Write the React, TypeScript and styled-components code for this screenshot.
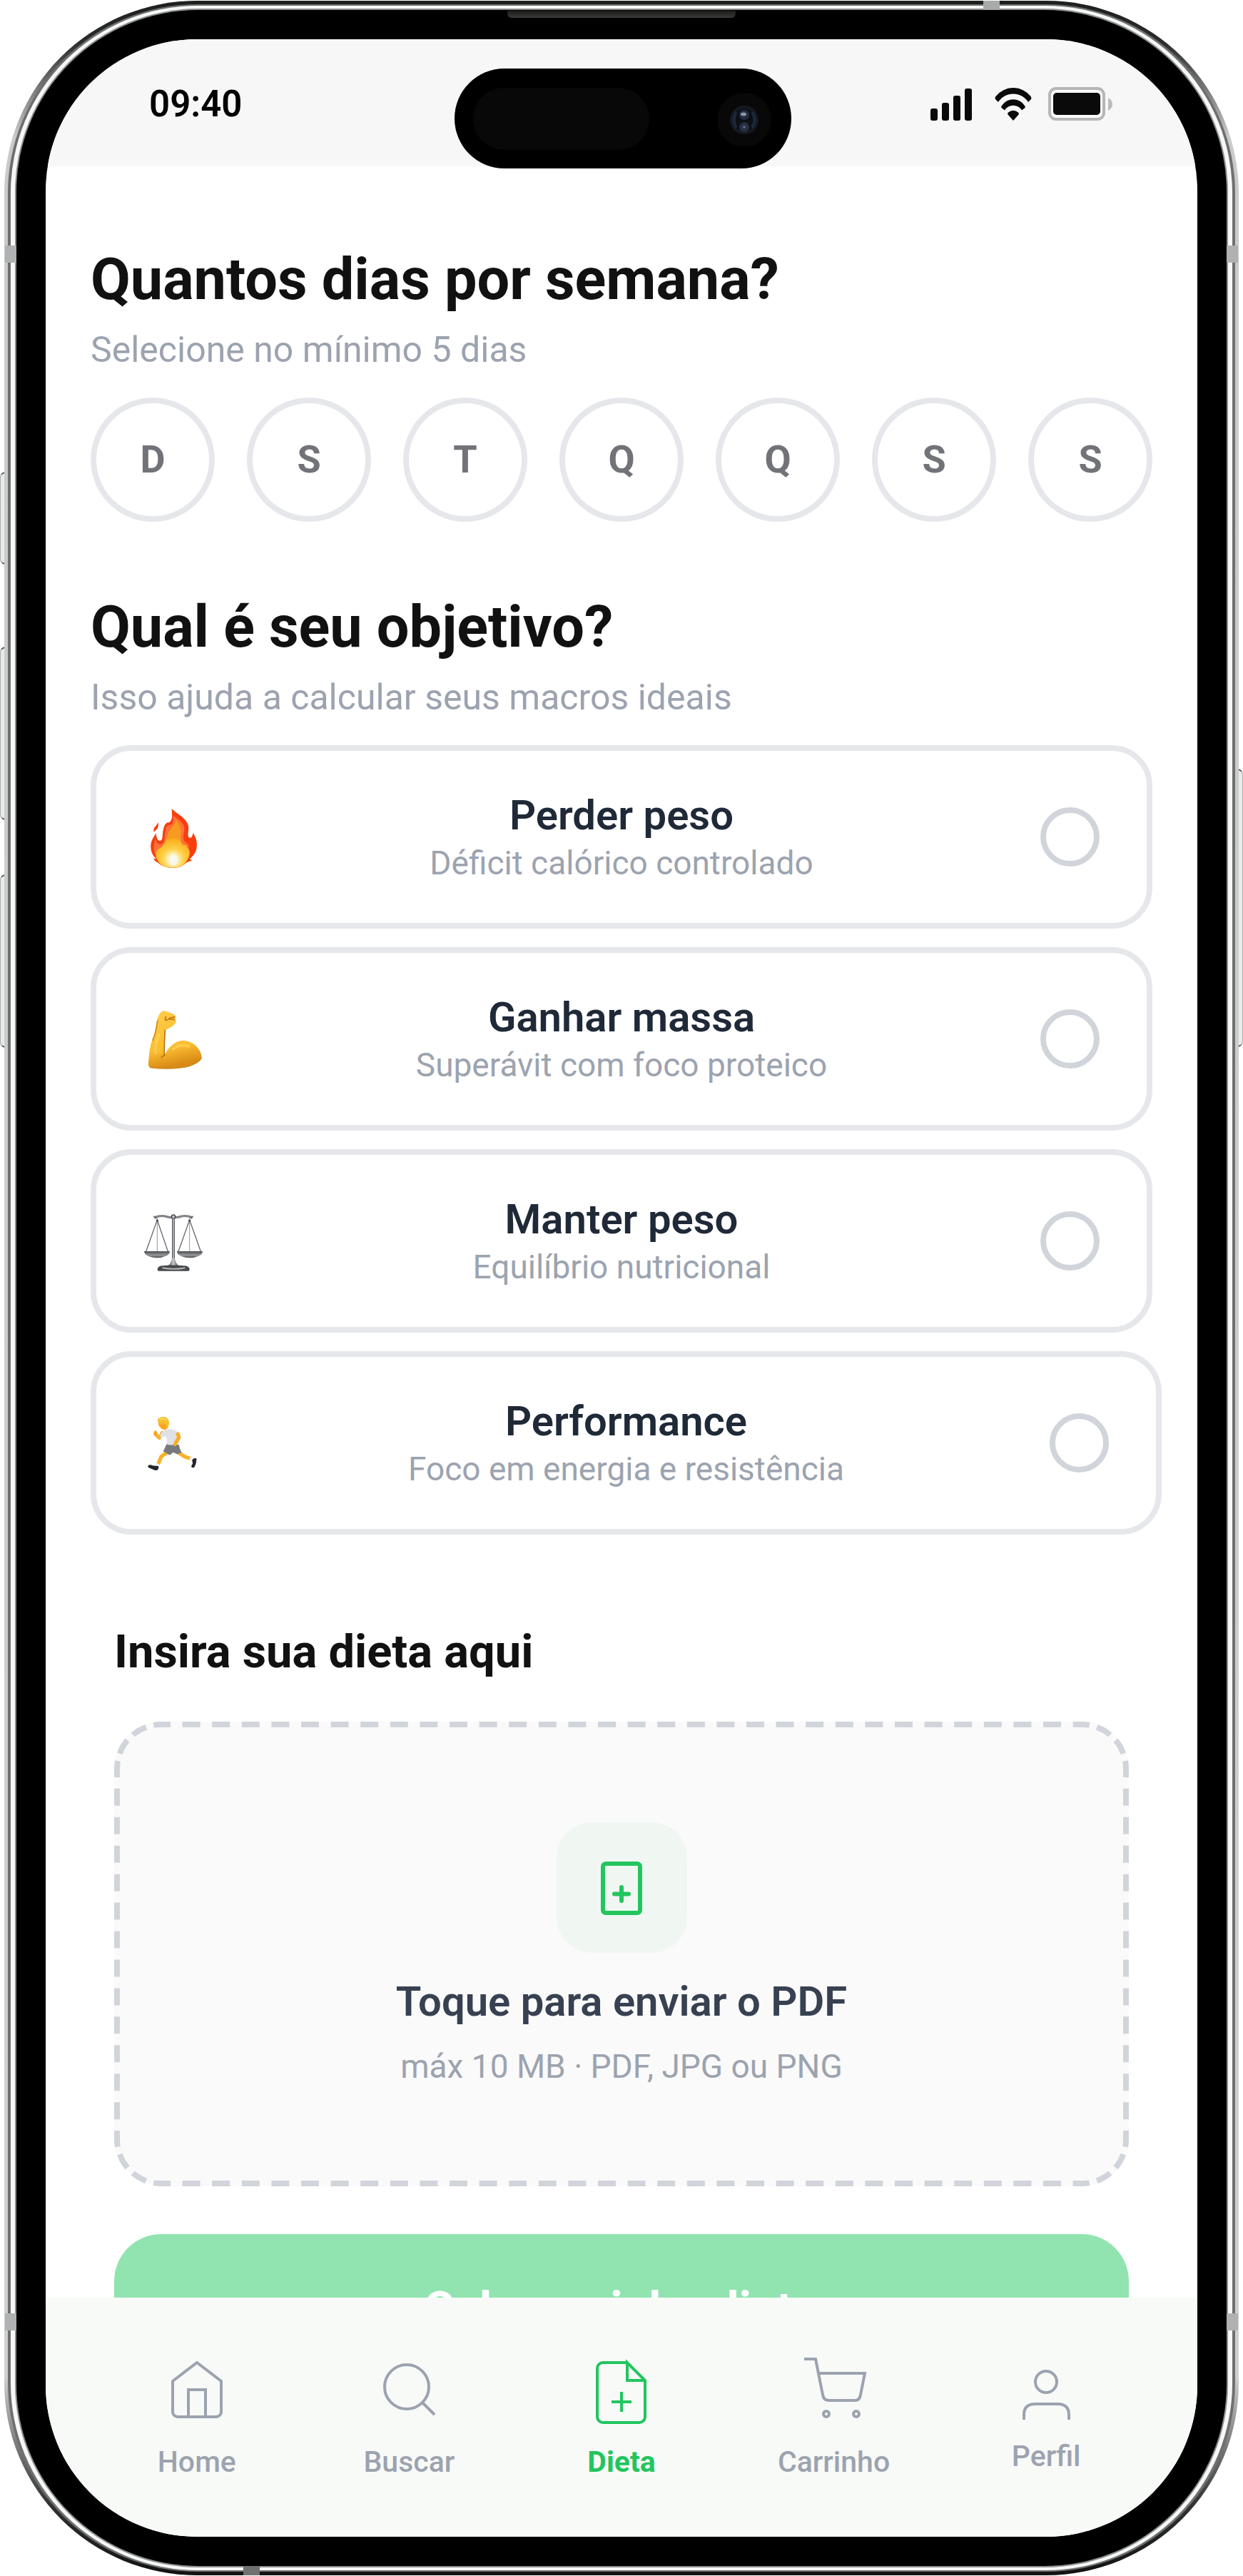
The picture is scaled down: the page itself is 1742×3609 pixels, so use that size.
import React, { useState } from "react";
import styled, { createGlobalStyle } from "styled-components";

const GlobalStyle = createGlobalStyle`
  *, *::before, *::after { box-sizing: border-box; }
  body { margin: 0; background: #fff; font-family: Roboto, "Noto Sans", sans-serif; }
  button, input { font-family: inherit; }
`;

/* ---------- Device ---------- */

const Page = styled.div`
  position: relative;
  height: 100vh;
  min-height: 2000px;
  padding: 1px 6px;
  display: flex;
`;

const Shell = styled.div`
  position: relative;
  flex: 1;
  display: flex;
  padding: 5px;
  border-radius: 270px;
  background: linear-gradient(180deg, #1d1f1c 0, #2c2d2b 60px, #c9cac9 190px, #d0d0d0 calc(100% - 280px), #333 calc(100% - 100px), #111 100%);
`;

const Rim = styled.div<{ $color: string; $y: number; $x: number; $radius: number }>`
  flex: 1;
  display: flex;
  min-height: 0;
  min-width: 0;
  padding: ${(p) => p.$y}px ${(p) => p.$x}px;
  border-radius: ${(p) => p.$radius}px;
  background: ${(p) => p.$color};
`;

const Screen = styled.div`
  flex: 1;
  min-width: 0;
  display: flex;
  flex-direction: column;
  overflow: hidden;
  border-radius: 212px;
  background: #fff;
`;

const SideButton = styled.i<{ $side: "left" | "right"; $top: number; $height: number }>`
  position: absolute;
  ${(p) => p.$side}: 0;
  top: ${(p) => p.$top}px;
  width: 8px;
  height: ${(p) => p.$height}px;
  border: 2px solid #555;
  border-${(p) => p.$side}: 1px solid #aaa;
  border-radius: ${(p) => (p.$side === "left" ? "8px 0 0 8px" : "0 8px 8px 0")};
  background: #e9ebea;
`;

const SideBand = styled.i<{ $side: "left" | "right"; $edge: "top" | "bottom" }>`
  position: absolute;
  ${(p) => p.$side}: 1px;
  ${(p) => p.$edge}: 343px;
  width: 16px;
  height: 24px;
  background: #b0b1b2;
`;

const EdgeBand = styled.i<{ $edge: "top" | "bottom" }>`
  position: absolute;
  ${(p) => p.$edge}: 0;
  ${(p) => (p.$edge === "top" ? "right" : "left")}: 335px;
  width: 23px;
  height: 13px;
  background: ${(p) => (p.$edge === "top" ? "#a8a9a9" : "#6f7070")};
`;

const Earpiece = styled.i`
  position: absolute;
  top: 14px;
  left: 50%;
  width: 320px;
  height: 10px;
  margin-left: -160px;
  border-radius: 0 0 6px 6px;
  background: linear-gradient(180deg, #1a1a19, #3a3a38);
`;

/* ---------- Status bar ---------- */

const StatusBar = styled.header`
  position: relative;
  flex: none;
  height: 178px;
  padding: 3px 119px 0 145px;
  display: flex;
  align-items: center;
  justify-content: space-between;
  background: #f7f7f7;
`;

const Clock = styled.time`
  font-size: 51px;
  line-height: 60px;
  font-weight: 600;
  color: #000;
`;

const StatusIcons = styled.div`
  display: flex;
  align-items: center;
  gap: 31px;
  svg { display: block; }
  svg:last-child { margin-left: -8px; }
`;

const Island = styled.div`
  position: absolute;
  z-index: 1;
  top: 41px;
  left: 50%;
  width: 472px;
  height: 140px;
  margin-left: -234px;
  padding: 0 26px;
  display: flex;
  align-items: center;
  justify-content: space-between;
  border-radius: 70px;
  background: #000;
`;

const Sensor = styled.i`
  width: 247px;
  height: 87px;
  border-radius: 44px;
  background: #080808;
`;

/* ---------- Content ---------- */

const Content = styled.main`
  flex: 1;
  min-height: 0;
  overflow-y: auto;
  scrollbar-width: none;
  padding: 109px 63px 60px;
`;

const Section = styled.section`
  & + & { margin-top: 98px; }
`;

const Heading = styled.h1`
  margin: 0;
  font-size: 81px;
  line-height: 100px;
  font-weight: 700;
  color: #111;
`;

const Lead = styled.p`
  margin: 18px 0 37px;
  font-size: 50px;
  line-height: 60px;
  color: #9ca3af;
`;

const Days = styled.div`
  display: flex;
  justify-content: space-between;
`;

const Day = styled.button<{ $on: boolean }>`
  width: 174px;
  height: 174px;
  padding: 0;
  border: 8px solid ${(p) => (p.$on ? "#22c55e" : "#e5e7eb")};
  border-radius: 50%;
  background: #fff;
  font-size: 54px;
  line-height: 64px;
  font-weight: 700;
  color: ${(p) => (p.$on ? "#22c55e" : "#717378")};
  cursor: pointer;
`;

const Goals = styled.div`
  display: flex;
  flex-direction: column;
  gap: 26px;
`;

const Goal = styled.label<{ $wide: boolean }>`
  height: 257px;
  margin-right: ${(p) => (p.$wide ? "-13px" : "0")};
  padding: 0 66px;
  display: flex;
  align-items: center;
  border: 8px solid #e5e7eb;
  border-radius: 57px;
  background: #fff;
  cursor: pointer;
  > svg { flex: none; overflow: visible; }
`;

const GoalText = styled.span`
  flex: 1;
  display: flex;
  flex-direction: column;
  gap: 3px;
  text-align: center;
`;

const Title = styled.span<{ $tone: string }>`
  font-size: 58px;
  line-height: 70px;
  font-weight: 600;
  color: ${(p) => p.$tone};
`;

const Note = styled.span`
  font-size: 46px;
  line-height: 58px;
  font-weight: 400;
  color: #9ca3af;
`;

const Radio = styled.input`
  appearance: none;
  flex: none;
  width: 83px;
  height: 83px;
  margin: 0;
  border: 8px solid #d1d5db;
  border-radius: 50%;
  &:checked { border: 24px solid #22c55e; }
`;

const Upload = styled.section`
  margin: 124px 33px 0;
`;

const SubHeading = styled.h2`
  margin: 0 0 58px;
  font-size: 65px;
  line-height: 80px;
  font-weight: 700;
  color: #111;
`;

const DropZone = styled.button`
  position: relative;
  width: 100%;
  padding: 141px 0 139px;
  display: flex;
  flex-direction: column;
  align-items: center;
  border: 0;
  border-radius: 66px;
  background: #fafafa;
  cursor: pointer;
`;

const DashedOutline = styled.svg`
  position: absolute;
  inset: 0;
  width: 100%;
  height: 100%;
  fill: none;
  stroke: #d1d5db;
  stroke-width: 8;
`;

const Tile = styled.span`
  width: 183px;
  height: 183px;
  margin-bottom: 33px;
  display: flex;
  align-items: center;
  justify-content: center;
  border-radius: 50px;
  background: #f0f7f3;
`;

const FileHint = styled(Note)`
  margin-top: 27px;
`;

const Save = styled.button`
  width: 100%;
  height: 212px;
  margin-top: 67px;
  border: 0;
  border-radius: 66px;
  background: #91e4af;
  font-size: 66px;
  line-height: 80px;
  font-weight: 700;
  color: #fff;
  cursor: pointer;
`;

/* ---------- Tab bar ---------- */

const TabBar = styled.nav`
  flex: none;
  height: 335px;
  padding: 80px 63px 0;
  display: flex;
  align-items: flex-start;
  background: #f8faf8;
`;

const Tab = styled.a<{ $active: boolean }>`
  flex: 1;
  display: flex;
  flex-direction: column;
  align-items: center;
  gap: 28px;
  font-size: 41px;
  line-height: 48px;
  font-weight: ${(p) => (p.$active ? 700 : 500)};
  color: ${(p) => (p.$active ? "#22c55e" : "#9ca3af")};
  text-decoration: none;
`;

/* ---------- Drawings ---------- */

const Signal = () => (
  <svg width="59" height="46" viewBox="0 0 59 46" fill="#0a0a0a" aria-hidden="true">
    <rect x="0" y="29" width="10" height="17" rx="3" />
    <rect x="16" y="21" width="10" height="25" rx="3" />
    <rect x="32" y="11" width="10" height="35" rx="3" />
    <rect x="48" y="1" width="10" height="45" rx="3" />
  </svg>
);

const Wifi = () => (
  <svg width="52" height="46" viewBox="0 0 52 46" fill="#0a0a0a" aria-hidden="true">
    <path d="M1.5 12A31 31 0 0 1 50.5 12Q52 14 51 16L47 20A25 25 0 0 0 5 20L1 16Q0 14 1.5 12Z" />
    <path d="M10 25A19 19 0 0 1 42 25Q43.5 27 42.5 28L38 31.5A14 14 0 0 0 14 31.5L9.5 28Q8.5 27 10 25Z" />
    <path d="M19 34.5Q26 29 33 34.5Q34.5 36 33.5 37.5L26 46L18.5 37.5Q17.5 36 19 34.5Z" />
  </svg>
);

const Battery = () => (
  <svg width="90" height="48" viewBox="0 0 90 48" aria-hidden="true">
    <rect x="2" y="2" width="76" height="43" rx="9" fill="#fbfbfb" stroke="#b6b6b6" strokeWidth="4" />
    <rect x="7" y="8" width="66" height="31" rx="5" fill="#0a0a0a" />
    <path d="M84 15Q90 18 90 24Q90 30 84 33Z" fill="#bcbcbc" />
  </svg>
);

const Camera = () => (
  <svg width="80" height="80" viewBox="0 0 80 80" aria-hidden="true">
    <circle cx="40" cy="42" r="38" fill="#080808" />
    <circle cx="40" cy="42" r="20" fill="#151a22" />
    <circle cx="40" cy="42" r="16" fill="#0d0f13" />
    <path d="M29 31Q22 42 29 53M51 31Q58 42 51 53" fill="none" stroke="#1d2840" strokeWidth="4" />
    <circle cx="40" cy="35" r="7" fill="#222d45" />
    <circle cx="40" cy="52" r="7" fill="#262f45" />
    <ellipse cx="39" cy="34" rx="4" ry="2.5" fill="#8f96a3" />
    <circle cx="40" cy="52" r="2" fill="#59627a" />
  </svg>
);

const Fire = () => (
  <svg width="83" height="83" viewBox="33 33 249 249" aria-hidden="true">
    <defs>
      <radialGradient id="flame" gradientUnits="userSpaceOnUse" cx="158" cy="252" r="92">
        <stop offset="0" stopColor="#fffdf2" />
        <stop offset="0.25" stopColor="#fdeeb0" />
        <stop offset="0.5" stopColor="#ffd043" />
        <stop offset="0.85" stopColor="#fbb526" />
        <stop offset="1" stopColor="#f79a20" />
      </radialGradient>
    </defs>
    <path fill="#f93d0d" d="M152 38C168 58 214 76 222 112C225 134 216 148 224 160C235 166 241 152 241 140C252 155 262 180 256 207C252 226 240 240 228 250L237 257C226 260 216 262 208 270C192 284 175 288 158 288C135 288 110 281 95 266C87 263 79 256 75 248L88 250C72 238 62 215 64 192C67 166 80 156 85 142C88 156 90 174 102 174C118 172 111 145 117 125C121 105 130 94 141 97C158 86 153 60 152 38Z" />
    <path fill="#f93d0d" d="M76 137C73 114 90 112 95 95C99 115 91 126 76 137Z" />
    <path fill="#ff7038" d="M156 66C174 82 200 92 205 118C206 140 196 152 204 172C210 186 222 182 224 196C226 218 218 240 208 256L96 250C82 234 74 214 78 186L84 166C88 182 94 190 106 188C128 182 120 150 126 128C130 110 138 106 147 108C160 100 160 84 156 66Z" />
    <path fill="url(#flame)" d="M170 84C182 104 194 122 191 144C186 166 190 184 200 190C214 196 216 190 217 204C232 212 230 236 216 256C204 280 180 287 158 287C134 287 112 281 100 266C88 254 80 232 88 218C92 206 98 208 104 204C124 192 126 172 134 150C142 124 162 116 170 84Z" />
    <ellipse cx="160" cy="254" rx="18" ry="24" fill="#f4faf3" opacity="0.8" />
  </svg>
);

const Arm = () => (
  <svg width="83" height="83" viewBox="33 882 249 249" aria-hidden="true">
    <defs>
      <linearGradient id="skin" x1="0" y1="0" x2="0.2" y2="1">
        <stop offset="0" stopColor="#ffcb45" />
        <stop offset="0.7" stopColor="#fbbd30" />
        <stop offset="1" stopColor="#d98a17" />
      </linearGradient>
    </defs>
    <path fill="url(#skin)" d="M118 888C134 892 152 898 165 906C170 912 170 918 167 924C172 932 172 938 166 942C156 954 144 962 126 968C124 1000 120 1040 122 1076C138 1040 165 1015 200 1014C240 1014 270 1044 277 1076C280 1098 258 1108 236 1118C190 1136 120 1134 62 1126C54 1124 53 1118 54 1108C58 1060 60 1030 76 1000C84 975 86 950 92 922C98 902 108 890 118 888Z" />
    <path fill="none" stroke="#bf7415" strokeWidth="5" strokeLinecap="round" d="M124 970Q120 1030 121 1072M108 1084Q116 1080 124 1072M128 914Q122 920 126 928Q136 930 142 920L164 914M144 924L164 925" />
    <path fill="none" stroke="#d18a1a" strokeWidth="5" strokeLinecap="round" d="M62 1126Q150 1138 226 1120Q268 1106 277 1086M92 930Q86 980 72 1012" />
    <path fill="none" stroke="#ffdc68" strokeWidth="12" strokeLinecap="round" opacity="0.5" d="M98 990Q80 1030 84 1066M160 1048Q190 1026 222 1038" />
  </svg>
);

const Scales = () => (
  <svg width="83" height="83" viewBox="33 21 249 249" aria-hidden="true">
    <defs>
      <linearGradient id="steel" x1="0" y1="0" x2="1" y2="0">
        <stop offset="0" stopColor="#3c3e42" />
        <stop offset="0.5" stopColor="#c9cacd" />
        <stop offset="1" stopColor="#3c3e42" />
      </linearGradient>
      <linearGradient id="pan" x1="0" y1="0" x2="0" y2="1">
        <stop offset="0" stopColor="#4a4c50" />
        <stop offset="0.6" stopColor="#96989c" />
        <stop offset="1" stopColor="#46484b" />
      </linearGradient>
    </defs>
    <path fill="none" stroke="#808287" strokeWidth="9" d="M78 47Q105 38 125 42Q146 50 159 44Q172 50 193 42Q213 38 240 47" />
    <path fill="#606267" d="M72 40L90 46L84 54ZM245 40L228 46L234 54Z" />
    <circle cx="159" cy="44" r="8" fill="#c8c9cc" stroke="#4b4d51" strokeWidth="5" />
    <rect x="153" y="52" width="12" height="172" fill="url(#steel)" />
    <path fill="none" stroke="#6a6c72" strokeWidth="4" d="M91 58L44 190M91 58L136 190M227 58L180 190M227 58L274 190" />
    <path fill="none" stroke="#94969c" strokeWidth="3" d="M91 46V190M227 46V190" />
    <circle cx="91" cy="60" r="5" fill="#4a4b50" />
    <circle cx="227" cy="60" r="5" fill="#4a4b50" />
    <path fill="url(#pan)" d="M36 189H144C144 198 138 204 130 208Q112 217 91 217Q68 217 50 208C42 203 36 198 36 189Z" />
    <path fill="url(#pan)" d="M174 189H282C282 198 276 204 268 208Q250 217 228 217Q206 217 188 208C180 203 174 198 174 189Z" />
    <path fill="url(#steel)" d="M153 218H165Q168 240 182 250H136Q150 240 153 218Z" />
    <path fill="#47494c" d="M92 266Q92 252 112 250Q159 245 206 250Q227 252 227 266Q227 272 220 272H99Q92 272 92 266Z" />
    <path fill="none" stroke="#b4b6b9" strokeWidth="6" d="M112 259Q159 268 208 259" />
  </svg>
);

const Runner = () => (
  <svg width="83" height="83" viewBox="33 870 249 249" aria-hidden="true">
    <path fill="none" stroke="#fbb02a" strokeWidth="15" strokeLinecap="round" strokeLinejoin="round" d="M112 952L100 974L84 958" />
    <path fill="none" stroke="#fbb02a" strokeWidth="16" strokeLinejoin="round" d="M138 1030L108 1052L94 1086M178 1034L206 1052L236 1062" />
    <path fill="#f8a21c" d="M76 950Q80 941 88 945Q93 952 90 962Q84 968 77 962Z" />
    <path fill="none" stroke="#f2f3f6" strokeWidth="14" d="M94 1082L90 1092M228 1060L242 1064" />
    <path fill="#23252e" d="M54 1088Q62 1084 72 1090L96 1092Q99 1100 93 1108Q84 1113 70 1105L55 1099Q50 1092 54 1088ZM238 1066Q246 1056 256 1060Q257 1080 248 1096Q240 1102 235 1096Q233 1090 240 1082Z" />
    <path fill="#77797e" d="M130 1000L182 1002Q186 1022 194 1036L174 1042L158 1034L144 1046L116 1030Q124 1016 130 1000Z" />
    <path fill="#dfe1e5" d="M124 940Q140 934 154 938Q176 942 184 956L170 968Q176 988 164 1002Q146 1006 130 1000Q136 984 126 966L108 974L102 966Q110 946 124 940Z" />
    <path fill="none" stroke="#f9ac27" strokeWidth="16" strokeLinecap="round" strokeLinejoin="round" d="M178 958L182 972L166 1000" />
    <circle cx="118" cy="912" r="23" fill="#fbb42c" />
    <path fill="#f9a41e" d="M102 918Q104 938 122 940L136 932V914Z" />
    <path fill="#f4c02f" d="M92 904Q92 888 110 886Q132 882 139 900Q142 920 133 932Q126 930 128 916L122 908Q106 912 92 904Z" />
    <path fill="none" stroke="#f9dd72" strokeWidth="5" d="M100 896Q116 888 130 898" />
  </svg>
);

const FilePlus = () => (
  <svg width="60" height="76" viewBox="0 0 60 76" fill="none" stroke="#22c55e" strokeWidth="6" strokeLinecap="round" aria-hidden="true">
    <rect x="4" y="4" width="52" height="69" rx="4" />
    <path d="M30 37V56M20 46.5H40" />
  </svg>
);

const tabIcons: Record<string, { height: number; shape: React.ReactNode }> = {
  Home: {
    height: 98,
    shape: (
      <>
        <path d="M15 37L49 11L83 37V80a7 7 0 0 1-7 7H22a7 7 0 0 1-7-7Z" />
        <path d="M37 87V49H61V87" />
      </>
    ),
  },
  Buscar: {
    height: 98,
    shape: (
      <>
        <circle cx="46" cy="45" r="31" />
        <path d="M68 67L85 84" />
      </>
    ),
  },
  Dieta: {
    height: 98,
    shape: (
      <>
        <path d="M57 11H23a8 8 0 0 0-8 8V87a8 8 0 0 0 8 8H74a8 8 0 0 0 8-8V36L57 11V36H82" />
        <path d="M49 52V80M35 66H63" />
      </>
    ),
  },
  Carrinho: {
    height: 98,
    shape: (
      <>
        <path d="M7 6H23L33 56Q34 64 42 64H78Q85 64 86 56L92 26H28" />
        <circle cx="38" cy="83" r="4" />
        <circle cx="80" cy="83" r="4" />
      </>
    ),
  },
  Perfil: {
    height: 90,
    shape: (
      <>
        <circle cx="49" cy="38" r="15" />
        <path d="M18 91V84Q18 69 34 69H65Q81 69 81 84V91" />
      </>
    ),
  },
};

const TabIcon = ({ name }: { name: string }) => (
  <svg
    width="98"
    height={tabIcons[name].height}
    viewBox={`0 0 98 ${tabIcons[name].height}`}
    fill="none"
    stroke="currentColor"
    strokeWidth="4"
    overflow="visible"
    aria-hidden="true"
  >
    {tabIcons[name].shape}
  </svg>
);

const Dashes = () => (
  <DashedOutline viewBox="0 0 1422 652" preserveAspectRatio="none" aria-hidden="true">
    <path strokeDasharray="25 16.6" strokeDashoffset="12" d="M66 4H1356M66 648H1356" />
    <path strokeDasharray="24 16" strokeDashoffset="12" d="M4 66V586M1418 66V586" />
    {["M1356 4A62 62 0 0 1 1418 66", "M66 4A62 62 0 0 0 4 66", "M4 586A62 62 0 0 0 66 648", "M1418 586A62 62 0 0 1 1356 648"].map((d) => (
      <path key={d} d={d} pathLength="90" strokeDasharray="10 10 20 10 20 10 10 0" />
    ))}
  </DashedOutline>
);

/* ---------- App ---------- */

const days = [
  { letter: "D", name: "Domingo" },
  { letter: "S", name: "Segunda" },
  { letter: "T", name: "Terça" },
  { letter: "Q", name: "Quarta" },
  { letter: "Q", name: "Quinta" },
  { letter: "S", name: "Sexta" },
  { letter: "S", name: "Sábado" },
];

const goals = [
  { title: "Perder peso", note: "Déficit calórico controlado", icon: <Fire /> },
  { title: "Ganhar massa", note: "Superávit com foco proteico", icon: <Arm /> },
  { title: "Manter peso", note: "Equilíbrio nutricional", icon: <Scales /> },
  { title: "Performance", note: "Foco em energia e resistência", icon: <Runner /> },
];

export default function App() {
  const [picked, setPicked] = useState<string[]>([]);
  const toggle = (name: string) =>
    setPicked((list) => (list.includes(name) ? list.filter((n) => n !== name) : [...list, name]));

  return (
    <>
      <GlobalStyle />
      <Page>
        <SideButton $side="left" $top={661} $height={130} />
        <SideButton $side="left" $top={906} $height={243} />
        <SideButton $side="left" $top={1225} $height={243} />
        <SideButton $side="right" $top={1077} $height={390} />
        <Shell>
          <Rim $color="#6e706f" $y={2} $x={4} $radius={265}>
            <Rim $color="#f6f7f7" $y={4} $x={6} $radius={262}>
              <Rim $color="#8d8f8e" $y={2} $x={2} $radius={257}>
                <Rim $color="#000" $y={41} $x={41} $radius={255}>
                  <Screen>
                    <StatusBar>
                      <Clock>09:40</Clock>
                      <Island>
                        <Sensor />
                        <Camera />
                      </Island>
                      <StatusIcons>
                        <Signal />
                        <Wifi />
                        <Battery />
                      </StatusIcons>
                    </StatusBar>

                    <Content>
                      <Section>
                        <Heading>Quantos dias por semana?</Heading>
                        <Lead>Selecione no mínimo 5 dias</Lead>
                        <Days>
                          {days.map((d) => (
                            <Day
                              key={d.name}
                              type="button"
                              title={d.name}
                              aria-pressed={picked.includes(d.name)}
                              $on={picked.includes(d.name)}
                              onClick={() => toggle(d.name)}
                            >
                              {d.letter}
                            </Day>
                          ))}
                        </Days>
                      </Section>

                      <Section>
                        <Heading as="h2">Qual é seu objetivo?</Heading>
                        <Lead>Isso ajuda a calcular seus macros ideais</Lead>
                        <Goals>
                          {goals.map((g, i) => (
                            <Goal key={g.title} $wide={i === goals.length - 1}>
                              {g.icon}
                              <GoalText>
                                <Title $tone="#1f2937">{g.title}</Title>
                                <Note>{g.note}</Note>
                              </GoalText>
                              <Radio type="radio" name="objetivo" value={g.title} />
                            </Goal>
                          ))}
                        </Goals>
                      </Section>

                      <Upload>
                        <SubHeading>Insira sua dieta aqui</SubHeading>
                        <DropZone type="button">
                          <Dashes />
                          <Tile>
                            <FilePlus />
                          </Tile>
                          <Title $tone="#374151">Toque para enviar o PDF</Title>
                          <FileHint>máx 10 MB · PDF, JPG ou PNG</FileHint>
                        </DropZone>
                        <Save type="button">Salvar minha dieta</Save>
                      </Upload>
                    </Content>

                    <TabBar>
                      {Object.keys(tabIcons).map((name) => (
                        <Tab key={name} href={`#${name.toLowerCase()}`} $active={name === "Dieta"}>
                          <TabIcon name={name} />
                          {name}
                        </Tab>
                      ))}
                    </TabBar>
                  </Screen>
                </Rim>
              </Rim>
            </Rim>
          </Rim>
          <SideBand $side="left" $edge="top" />
          <SideBand $side="right" $edge="top" />
          <SideBand $side="left" $edge="bottom" />
          <SideBand $side="right" $edge="bottom" />
          <EdgeBand $edge="top" />
          <EdgeBand $edge="bottom" />
          <Earpiece />
        </Shell>
      </Page>
    </>
  );
}
